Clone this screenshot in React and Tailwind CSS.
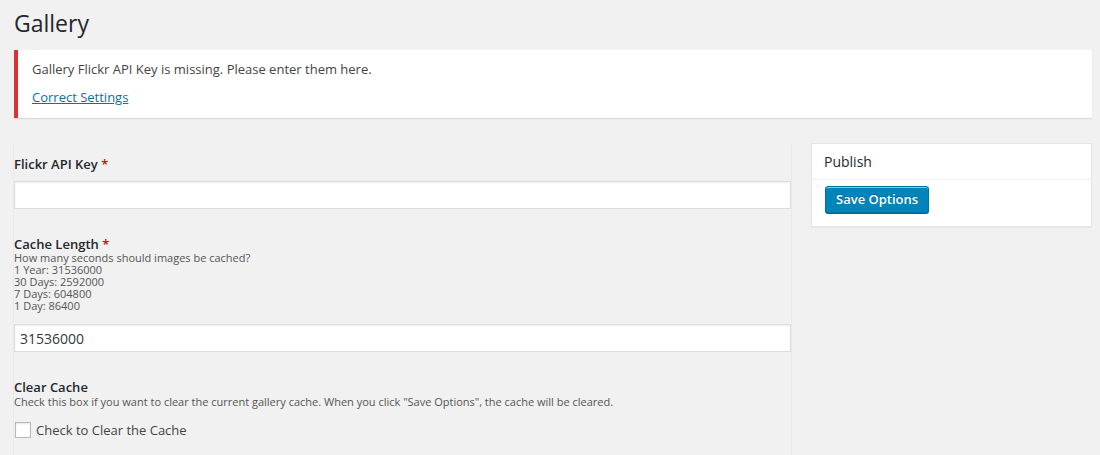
export default function App() {
  return (
    <div className="min-h-[455px] bg-[#f1f1f1] text-[#444] font-['Open_Sans',sans-serif] text-[13px] overflow-hidden">
      <div className="pl-[14px] pr-[8px]">
        <h1 className="pt-[9px] pb-[4px] text-[23px] leading-[29px] text-[#23282d] font-normal">Gallery</h1>

        <div className="mt-[8px] bg-white border-l-4 border-[#dc3232] shadow-[0_1px_1px_rgba(0,0,0,0.1)] px-[14px] py-[1px]">
          <p className="my-[8px] leading-[20px] text-[#444]">Gallery Flickr API Key is missing. Please enter them here.</p>
          <p className="mb-[10px] leading-[20px]">
            <a href="#" className="text-[#0073aa] underline">Correct Settings</a>
          </p>
        </div>

        <div className="mt-[25px] flex gap-[19px]">
          <div className="w-[779px] pb-[20px] border-x border-[#e9e9e9] -ml-[1px]">
            <div className="pt-[12px]">
              <label className="block font-semibold text-[#23282d] leading-[18px]">
                Flickr API Key <span className="text-[#dd0000]">*</span>
              </label>
              <input type="text" className="mt-[8px] block w-full h-[28px] bg-white border border-[#ddd] shadow-[inset_0_1px_2px_rgba(0,0,0,0.07)]" />
            </div>

            <div className="mt-[26px]">
              <label className="block font-semibold text-[#23282d] leading-[18px]">
                Cache Length <span className="text-[#dd0000]">*</span>
              </label>
              <div className="-mt-[1px] text-[11px] leading-[12px] text-[#555]">
                <div>How many seconds should images be cached?</div>
                <div>1 Year: 31536000</div>
                <div>30 Days: 2592000</div>
                <div>7 Days: 604800</div>
                <div>1 Day: 86400</div>
              </div>
              <input
                type="text"
                defaultValue="31536000"
                className="mt-[12px] block w-full h-[28px] bg-white border border-[#ddd] px-[5px] text-[14px] text-[#32373c] shadow-[inset_0_1px_2px_rgba(0,0,0,0.07)] font-['Open_Sans',sans-serif]"
              />
            </div>

            <div className="mt-[26px]">
              <div className="font-semibold text-[#23282d] leading-[18px]">Clear Cache</div>
              <div className="text-[11px] leading-[12px] text-[#555]">
                Check this box if you want to clear the current gallery cache. When you click "Save Options", the cache will be cleared.
              </div>
              <label className="mt-[14px] flex items-center gap-[5px] text-[13px] text-[#444]">
                <span className="ml-[1px] w-[16px] h-[16px] bg-white border border-[#b4b9be] shadow-[inset_0_1px_2px_rgba(0,0,0,0.1)]" />
                <span className="leading-[16px]">Check to Clear the Cache</span>
              </label>
            </div>
          </div>

          <div className="w-[281px] self-start bg-white border border-[#e5e5e5] shadow-[0_1px_1px_rgba(0,0,0,0.04)]">
            <div className="px-[12px] h-[36px] flex items-center border-b border-[#eee] text-[14px] text-[#23282d] leading-[18px]">
              Publish
            </div>
            <div className="px-[13px] pt-[6px] pb-[13px]">
              <button className="h-[27px] px-[10px] rounded-[3px] bg-[#0085ba] border border-[#0073aa] shadow-[inset_0_1px_0_#78c8e6,0_1px_0_#006799] text-white text-[13px] font-semibold leading-[25px] [text-shadow:0_-1px_1px_#006799]">
                Save Options
              </button>
            </div>
          </div>
        </div>
      </div>
    </div>
  )
}
